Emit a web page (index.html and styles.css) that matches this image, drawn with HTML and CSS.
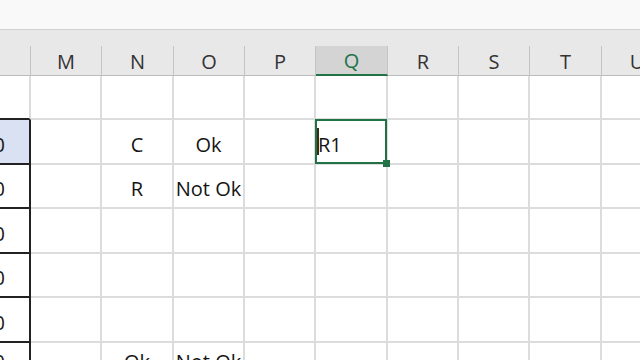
FILE: index.html
```html
<!DOCTYPE html>
<html lang="en">
<head>
    <meta charset="UTF-8">
    <meta name="viewport" content="width=device-width, initial-scale=1.0">
    <title>Sheet1</title>
    <link rel="stylesheet" href="styles.css">
</head>
<body>

<div class="topbar"></div>

<div class="sheet">
    <div class="row head">
        <div class="hd"></div>
        <div class="hd">M</div>
        <div class="hd">N</div>
        <div class="hd">O</div>
        <div class="hd">P</div>
        <div class="hd sel">Q</div>
        <div class="hd">R</div>
        <div class="hd">S</div>
        <div class="hd">T</div>
        <div class="hd">U</div>
    </div>

    <div class="row">
        <div class="cell rng-top"></div>
        <div class="cell"></div>
        <div class="cell"></div>
        <div class="cell"></div>
        <div class="cell"></div>
        <div class="cell"></div>
        <div class="cell"></div>
        <div class="cell"></div>
        <div class="cell"></div>
        <div class="cell"></div>
    </div>

    <div class="row tall">
        <div class="cell rng fill">0</div>
        <div class="cell"></div>
        <div class="cell">C</div>
        <div class="cell">Ok</div>
        <div class="cell"></div>
        <div class="cell active"><span class="caret"></span>R1</div>
        <div class="cell"></div>
        <div class="cell"></div>
        <div class="cell"></div>
        <div class="cell"></div>
    </div>

    <div class="row">
        <div class="cell rng">0</div>
        <div class="cell"></div>
        <div class="cell">R</div>
        <div class="cell">Not Ok</div>
        <div class="cell"></div>
        <div class="cell"></div>
        <div class="cell"></div>
        <div class="cell"></div>
        <div class="cell"></div>
        <div class="cell"></div>
    </div>

    <div class="row tall">
        <div class="cell rng">0</div>
        <div class="cell"></div>
        <div class="cell"></div>
        <div class="cell"></div>
        <div class="cell"></div>
        <div class="cell"></div>
        <div class="cell"></div>
        <div class="cell"></div>
        <div class="cell"></div>
        <div class="cell"></div>
    </div>

    <div class="row">
        <div class="cell rng">0</div>
        <div class="cell"></div>
        <div class="cell"></div>
        <div class="cell"></div>
        <div class="cell"></div>
        <div class="cell"></div>
        <div class="cell"></div>
        <div class="cell"></div>
        <div class="cell"></div>
        <div class="cell"></div>
    </div>

    <div class="row tall">
        <div class="cell rng">0</div>
        <div class="cell"></div>
        <div class="cell"></div>
        <div class="cell"></div>
        <div class="cell"></div>
        <div class="cell"></div>
        <div class="cell"></div>
        <div class="cell"></div>
        <div class="cell"></div>
        <div class="cell"></div>
    </div>

    <div class="row last">
        <div class="cell rng">0</div>
        <div class="cell"></div>
        <div class="cell">Ok</div>
        <div class="cell">Not Ok</div>
        <div class="cell"></div>
        <div class="cell"></div>
        <div class="cell"></div>
        <div class="cell"></div>
        <div class="cell"></div>
        <div class="cell"></div>
    </div>
</div>

</body>
</html>
```

FILE: styles.css
```css
body {
    margin: 0;
    overflow: hidden;
    background-color: #fff;
    font-family: "Open Sans", "Liberation Sans", sans-serif;
}
.topbar {
    height: 29px;
    background-color: #f9f9f9;
    border-bottom: 1px solid #d2d2d2;
}
.sheet {
    width: 673px;
}
.row {
    display: grid;
    grid-template-columns: 31px 71px 72px 71px 71px 72px 71px 71px 72px 71px;
    height: 44px;
}
.row.tall {
    height: 45px;
}
.head {
    height: 30px;
    padding-top: 16px;
    background-color: #e8e8e8;
}
.hd {
    box-sizing: border-box;
    display: flex;
    align-items: center;
    justify-content: center;
    padding-top: 1px;
    border-right: 1px solid #c4c4c4;
    border-bottom: 1px solid #bcbcbc;
    font-size: 20px;
    color: #333;
}
.hd.sel {
    background-color: #d4d4d4;
    color: #217346;
    border-bottom: 2px solid #217346;
}
.cell {
    position: relative;
    box-sizing: border-box;
    display: flex;
    align-items: flex-end;
    justify-content: center;
    padding-bottom: 8px;
    border-right: 2px solid #dcdcdc;
    border-bottom: 2px solid #dcdcdc;
    font-size: 20px;
    line-height: 20px;
    color: #151515;
    white-space: nowrap;
}
.cell.rng-top {
    border-bottom-color: #222;
}
.cell.rng {
    justify-content: flex-end;
    padding-right: 24px;
    overflow: hidden;
    border-right-color: #222;
    border-bottom-color: #222;
}
.cell.fill {
    background-color: #d9e1f2;
}
.row.last .cell {
    align-items: flex-start;
    padding-top: 9px;
    padding-bottom: 0;
}
.cell.active {
    justify-content: flex-start;
    padding-left: 1px;
}
.cell.active::after {
    content: "";
    position: absolute;
    left: -1px;
    top: -1px;
    right: -1px;
    bottom: -1px;
    border: 2px solid #217346;
}
.cell.active::before {
    content: "";
    position: absolute;
    right: -4px;
    bottom: -4px;
    width: 7px;
    height: 7px;
    background-color: #217346;
    z-index: 1;
}
.caret {
    width: 2px;
    height: 27px;
    margin-bottom: 0;
    margin-right: -1px;
    background-color: #3b2a1c;
}
```
